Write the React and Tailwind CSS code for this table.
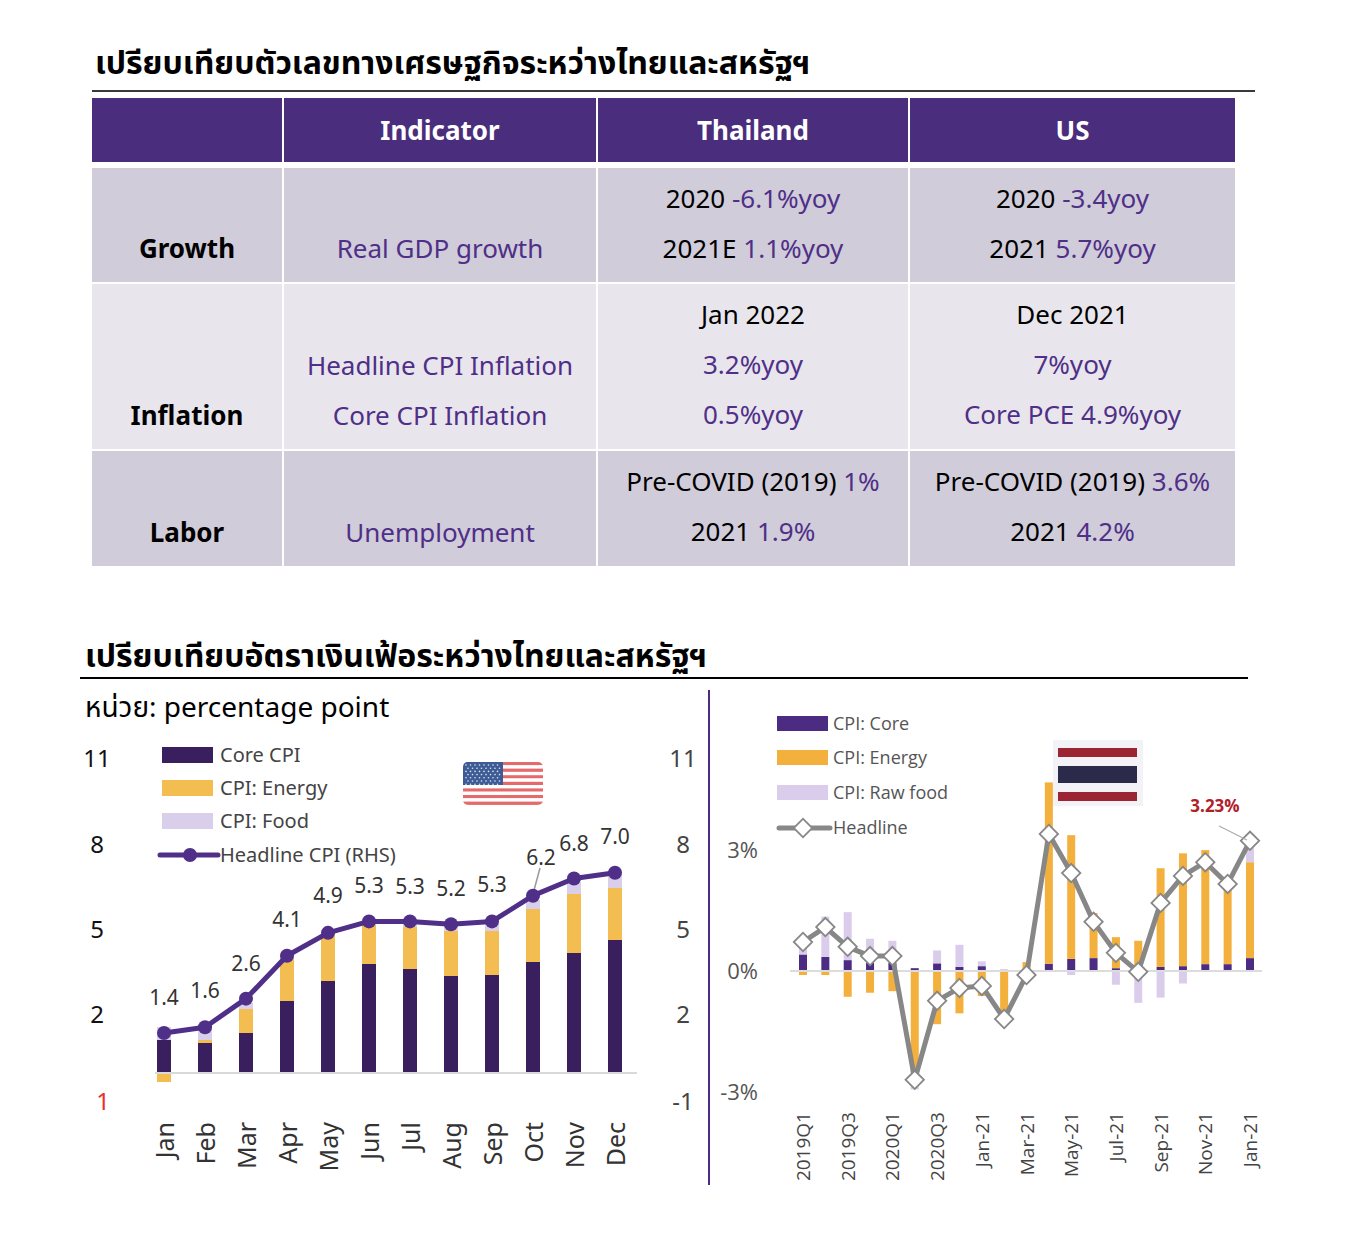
const thai = { fontFamily: '"Liberation Sans Narrow", "Noto Sans", "Noto Sans Thai", sans-serif' };

const PURPLE = "#4f2f87";

// left chart: page coords, zero line at y=1073, 28.6px per point
const usBars = [
  { core: 1040, energy: 1082, food: 1027, neg: true },
  { core: 1043, energy: 1040, food: 1027 },
  { core: 1033, energy: 1009, food: 1003 },
  { core: 1001, energy: 958, food: 955 },
  { core: 981, energy: 935, food: 930 },
  { core: 964, energy: 925, food: 921 },
  { core: 969, energy: 927, food: 924 },
  { core: 976, energy: 931, food: 926 },
  { core: 975, energy: 931, food: 923 },
  { core: 962, energy: 909, food: 900 },
  { core: 953, energy: 894, food: 882 },
  { core: 940, energy: 888, food: 874 },
];
const usHeadline = [1.4, 1.6, 2.6, 4.1, 4.9, 5.3, 5.3, 5.2, 5.3, 6.2, 6.8, 7.0];
const months = ["Jan", "Feb", "Mar", "Apr", "May", "Jun", "Jul", "Aug", "Sep", "Oct", "Nov", "Dec"];

// right chart: zero at y=971, 40.3px per %
const thBars = [
  [0.41, -0.1, 0.3],
  [0.35, -0.1, 1.0],
  [0.27, -0.64, 1.19],
  [0.2, -0.54, 0.6],
  [0.2, -0.5, 0.55],
  [0.07, -2.69, -0.25],
  [0.19, -1.32, 0.32],
  [0.1, -1.05, 0.55],
  [0.12, -0.62, 0.12],
  [0.03, -1.0, 0],
  [0, 0.22, 0],
  [0.18, 4.5, 0],
  [0.3, 3.07, -0.1],
  [0.32, 1.12, 0],
  [0.07, 0.77, -0.34],
  [0, 0.75, -0.79],
  [0.1, 2.45, -0.66],
  [0.12, 2.8, -0.31],
  [0.17, 2.83, 0],
  [0.17, 1.96, 0],
  [0.32, 2.38, 0.47],
];
const thHeadline = [0.72, 1.09, 0.6, 0.37, 0.37, -2.7, -0.74, -0.42, -0.37, -1.19, -0.1, 3.4, 2.43, 1.22, 0.45, -0.02, 1.69, 2.36, 2.7, 2.16, 3.23];
const thLabels = ["2019Q1", "2019Q3", "2020Q1", "2020Q3", "Jan-21", "Mar-21", "May-21", "Jul-21", "Sep-21", "Nov-21", "Jan-21"];

const Purple = ({ children }) => <span style={{ color: PURPLE }}>{children}</span>;

const Row = ({ bg, label, indicator, th, us, h }) => (
  <div className={`flex gap-[2px] ${h}`}>
    <div className={`w-[190px] ${bg} flex flex-col justify-end items-center pb-[9px]`}>
      <div className="leading-[50px] font-bold">{label}</div>
    </div>
    <div className={`w-[312px] ${bg} flex flex-col justify-end items-center pb-[9px]`}>
      {indicator.map((t, i) => (
        <div key={i} className="leading-[50px]" style={{ color: PURPLE }}>
          {t}
        </div>
      ))}
    </div>
    <div className={`w-[310px] ${bg} flex flex-col items-center pt-[5px]`}>
      {th.map((t, i) => (
        <div key={i} className="leading-[50px]">
          {t}
        </div>
      ))}
    </div>
    <div className={`w-[325px] ${bg} flex flex-col items-center pt-[5px]`}>
      {us.map((t, i) => (
        <div key={i} className="leading-[50px]">
          {t}
        </div>
      ))}
    </div>
  </div>
);

const UsFlag = () => {
  const stripes = [];
  for (let i = 0; i < 13; i++) {
    stripes.push(
      <rect key={i} x="463" y={762 + i * 3.3} width="80" height="3.3" fill={i % 2 === 0 ? "#e56a6c" : "#ffffff"} />
    );
  }
  const stars = [];
  for (let r = 0; r < 7; r++) {
    for (let c = 0; c < 8; c++) {
      stars.push(<circle key={`${r}-${c}`} cx={466 + c * 4.5 + (r % 2) * 2} cy={765 + r * 3.2} r="0.8" fill="#dfe6f3" />);
    }
  }
  return (
    <g>
      <clipPath id="usclip">
        <rect x="463" y="762" width="80" height="43" rx="5" />
      </clipPath>
      <g clipPath="url(#usclip)">
        {stripes}
        <rect x="463" y="762" width="40" height="23" fill="#3d5b95" />
        {stars}
      </g>
    </g>
  );
};

const UsChart = () => {
  const pts = usHeadline.map((v, i) => [164 + 41 * i, 1073 - v * 28.6]);
  const labelPos = [
    [164, 997], [205, 990], [246, 963], [287, 919], [328, 895], [369, 885],
    [410, 886], [451, 888], [492, 884], [541, 857], [574, 843], [615, 836],
  ];
  return (
    <svg width="628" height="460" viewBox="80 730 628 460" className="block">
      <g style={thai} fontSize="24">
        {[["11", 757], ["8", 843], ["5", 928], ["2", 1013]].map(([t, y]) => (
          <text key={t} x="97" y={y} textAnchor="middle" dominantBaseline="central" fill="#111">{t}</text>
        ))}
        <text x="103" y="1100" textAnchor="middle" dominantBaseline="central" fill="#e8302a">1</text>
        {[["11", 757], ["8", 843], ["5", 928], ["2", 1013], ["-1", 1100]].map(([t, y]) => (
          <text key={t} x="683" y={y} textAnchor="middle" dominantBaseline="central" fill="#444">{t}</text>
        ))}
      </g>

      {/* legend */}
      <rect x="162" y="747" width="51" height="16" fill="#3a1f5e" />
      <rect x="162" y="780" width="51" height="16" fill="#f3bd52" />
      <rect x="162" y="813" width="51" height="16" fill="#d9cfea" />
      <line x1="160" y1="855" x2="218" y2="855" stroke={PURPLE} strokeWidth="5" strokeLinecap="round" />
      <circle cx="190" cy="855" r="7" fill={PURPLE} />
      <g style={thai} fontSize="20" fill="#444">
        <text x="220" y="754" dominantBaseline="central">Core CPI</text>
        <text x="220" y="787" dominantBaseline="central">CPI: Energy</text>
        <text x="220" y="820" dominantBaseline="central">CPI: Food</text>
        <text x="220" y="854" dominantBaseline="central">Headline CPI (RHS)</text>
      </g>

      <UsFlag />

      {/* bars */}
      {usBars.map((b, i) => {
        const x = 157 + 41 * i;
        return (
          <g key={i}>
            <rect x={x} y={b.food} width="14" height={(b.neg ? b.core : b.energy) - b.food} fill="#d9cfea" />
            {b.neg ? (
              <rect x={x} y="1073" width="14" height={b.energy - 1073} fill="#f3bd52" />
            ) : (
              <rect x={x} y={b.energy} width="14" height={b.core - b.energy} fill="#f3bd52" />
            )}
            <rect x={x} y={b.core} width="14" height={1073 - b.core} fill="#3a1f5e" />
          </g>
        );
      })}
      <line x1="155" y1="1073" x2="637" y2="1073" stroke="#d9d9d9" strokeWidth="2" />

      {/* headline */}
      <line x1="533" y1="894" x2="540" y2="868" stroke="#999" strokeWidth="1.5" />
      <polyline points={pts.map((p) => p.join(",")).join(" ")} fill="none" stroke={PURPLE} strokeWidth="5" strokeLinejoin="round" />
      {pts.map((p, i) => (
        <circle key={i} cx={p[0]} cy={p[1]} r="7" fill={PURPLE} />
      ))}
      <g style={thai} fontSize="21" fill="#333">
        {usHeadline.map((v, i) => (
          <text key={i} x={labelPos[i][0]} y={labelPos[i][1]} textAnchor="middle" dominantBaseline="central">
            {v.toFixed(1)}
          </text>
        ))}
      </g>

      <g style={thai} fontSize="25" fill="#333">
        {months.map((m, i) => (
          <text key={m} x={164 + 41 * i} y="1122" transform={`rotate(-90 ${164 + 41 * i} 1122)`} textAnchor="end" dominantBaseline="central">
            {m}
          </text>
        ))}
      </g>
    </svg>
  );
};

const ThChart = () => {
  const X = (i) => 803 + 22.35 * i;
  const Y = (v) => 971 - v * 40.3;
  const pts = thHeadline.map((v, i) => [X(i), Y(v)]);
  const seg = (v0, v1) => {
    const a = Y(v0);
    const b = Y(v1);
    return { y: Math.min(a, b), h: Math.abs(a - b) };
  };
  const ui = { fontFamily: '"Open Sans", "Noto Sans", sans-serif' };
  return (
    <svg width="560" height="500" viewBox="710 690 560 500" className="block">
      {/* legend */}
      <rect x="777" y="716" width="51" height="15" fill="#4b2c82" />
      <rect x="777" y="750" width="51" height="15" fill="#f3b03d" />
      <rect x="777" y="785" width="51" height="15" fill="#dacdec" />
      <line x1="779" y1="828" x2="830" y2="828" stroke="#888" strokeWidth="5" strokeLinecap="round" />
      <rect x="796.5" y="821.5" width="13" height="13" transform="rotate(45 803 828)" fill="#fff" stroke="#888" strokeWidth="1.8" />
      <g style={ui} fontSize="18" fill="#555">
        <text x="833" y="723" dominantBaseline="central">CPI: Core</text>
        <text x="833" y="757" dominantBaseline="central">CPI: Energy</text>
        <text x="833" y="792" dominantBaseline="central">CPI: Raw food</text>
        <text x="833" y="827" dominantBaseline="central">Headline</text>
      </g>

      {/* flag */}
      <rect x="1053" y="740" width="90" height="66" fill="#f2f2f7" />
      <rect x="1058" y="748" width="79" height="9" fill="#9b2532" />
      <rect x="1058" y="766" width="79" height="17" fill="#2c2a4a" />
      <rect x="1058" y="792" width="79" height="9" fill="#9b2532" />

      <g style={ui} fontSize="22" fill="#555">
        <text x="758" y="849" textAnchor="end" dominantBaseline="central">3%</text>
        <text x="758" y="970" textAnchor="end" dominantBaseline="central">0%</text>
        <text x="758" y="1091" textAnchor="end" dominantBaseline="central">-3%</text>
      </g>

      {/* bars */}
      {thBars.map(([c, e, f], i) => {
        const x = X(i) - 4;
        const core = seg(0, c);
        const e0 = e >= 0 ? c : 0;
        const energy = seg(e0, e0 + e);
        const f0 = f >= 0 ? (e >= 0 ? c + e : c) : e < 0 ? e : 0;
        const food = seg(f0, f0 + f);
        return (
          <g key={i}>
            <rect x={x} y={core.y} width="8" height={core.h} fill="#4b2c82" />
            <rect x={x} y={energy.y} width="8" height={energy.h} fill="#f3b03d" />
            <rect x={x} y={food.y} width="8" height={food.h} fill="#dacdec" />
          </g>
        );
      })}
      <line x1="790" y1="971" x2="1262" y2="971" stroke="#dcdcdc" strokeWidth="2" />

      <polyline points={pts.map((p) => p.join(",")).join(" ")} fill="none" stroke="#878787" strokeWidth="5" strokeLinejoin="round" />
      {pts.map((p, i) => (
        <rect key={i} x={p[0] - 6.5} y={p[1] - 6.5} width="13" height="13" transform={`rotate(45 ${p[0]} ${p[1]})`} fill="#fff" stroke="#878787" strokeWidth="1.8" />
      ))}
      <line x1="1219" y1="826" x2="1247" y2="840" stroke="#aaa" strokeWidth="1.2" />
      <text x="1215" y="805" textAnchor="middle" dominantBaseline="central" style={ui} fontSize="17" fontWeight="700" fill="#b0202a">
        3.23%
      </text>

      <g style={ui} fontSize="19" fill="#444">
        {thLabels.map((t, k) => {
          const x = X(k * 2);
          return (
            <text key={k} x={x} y="1112" transform={`rotate(-90 ${x} 1112)`} textAnchor="end" dominantBaseline="central">
              {t}
            </text>
          );
        })}
      </g>
    </svg>
  );
};

export default function App() {
  return (
    <div className="w-[1352px] h-[1256px] bg-white text-black overflow-hidden" style={thai}>
      <div className="pt-[40px] pl-[92px]">
        <h1 className="text-[32px] font-bold leading-[44px] pl-[3px]">เปรียบเทียบตัวเลขทางเศรษฐกิจระหว่างไทยและสหรัฐฯ</h1>
        <div className="w-[1163px] h-[2px] bg-[#3a3a3a] mt-[6px]" />

        <div className="mt-[6px] w-[1143px] text-[26px]">
          <div className="flex gap-[2px] h-[64px] text-white font-bold">
            <div className="w-[190px] bg-[#4a2d7c]" />
            <div className="w-[312px] bg-[#4a2d7c] flex items-center justify-center">Indicator</div>
            <div className="w-[310px] bg-[#4a2d7c] flex items-center justify-center">Thailand</div>
            <div className="w-[325px] bg-[#4a2d7c] flex items-center justify-center">US</div>
          </div>
          <div className="flex flex-col gap-[2px] mt-[6px]">
            <Row
              bg="bg-[#d0ccd9]"
              h="h-[114px]"
              label="Growth"
              indicator={["Real GDP growth"]}
              th={[
                <>2020 <Purple>-6.1%yoy</Purple></>,
                <>2021E <Purple>1.1%yoy</Purple></>,
              ]}
              us={[
                <>2020 <Purple>-3.4yoy</Purple></>,
                <>2021 <Purple>5.7%yoy</Purple></>,
              ]}
            />
            <Row
              bg="bg-[#e8e6ec]"
              h="h-[165px]"
              label="Inflation"
              indicator={["Headline CPI Inflation", "Core CPI Inflation"]}
              th={["Jan 2022", <Purple>3.2%yoy</Purple>, <Purple>0.5%yoy</Purple>]}
              us={["Dec 2021", <Purple>7%yoy</Purple>, <Purple>Core PCE 4.9%yoy</Purple>]}
            />
            <Row
              bg="bg-[#d0ccd9]"
              h="h-[115px]"
              label="Labor"
              indicator={["Unemployment"]}
              th={[
                <>Pre-COVID (2019) <Purple>1%</Purple></>,
                <>2021 <Purple>1.9%</Purple></>,
              ]}
              us={[
                <>Pre-COVID (2019) <Purple>3.6%</Purple></>,
                <>2021 <Purple>4.2%</Purple></>,
              ]}
            />
          </div>
        </div>
      </div>

      <div className="pl-[80px] mt-[67px]">
        <h2 className="text-[32px] font-bold leading-[44px] pl-[5px]">เปรียบเทียบอัตราเงินเฟ้อระหว่างไทยและสหรัฐฯ</h2>
        <div className="w-[1168px] h-[2px] bg-black mt-0" />
        <div className="flex mt-[11px]">
          <div className="flex flex-col">
            <div className="h-[40px] text-[28px] leading-[32px] pl-[5px]">หน่วย: percentage point</div>
            <UsChart />
          </div>
          <div className="w-[2px] h-[495px] bg-[#4b2c82]" />
          <ThChart />
        </div>
      </div>
    </div>
  );
}
